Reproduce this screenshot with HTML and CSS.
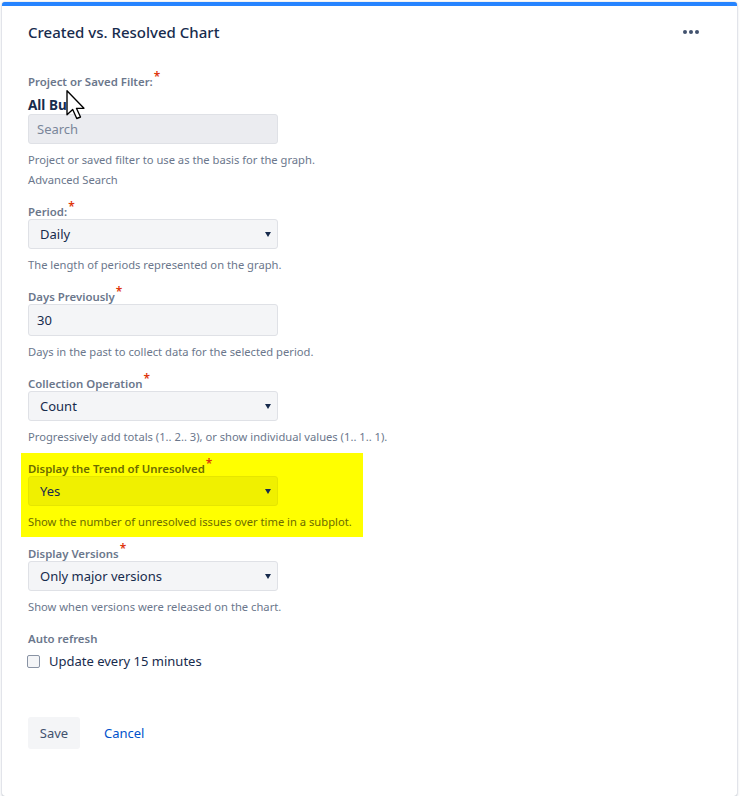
FILE: index.html
```html
<!DOCTYPE html>
<html lang="en">
<head>
    <meta charset="UTF-8">
    <title>Created vs. Resolved Chart</title>
    <link rel="stylesheet" href="styles.css">
</head>
<body>
  <div class="card">
    <div class="card-header">
      <h2 class="card-title">Created vs. Resolved Chart</h2>
      <span class="menu-dots"><i></i><i></i><i></i></span>
    </div>

    <form class="gadget-form">
      <div class="field">
        <label class="field-label">Project or Saved Filter:<sup>*</sup></label>
        <div class="filter-name">All Bu</div>
        <input type="text" class="text-input search-input" placeholder="Search">
        <p class="field-desc">Project or saved filter to use as the basis for the graph.</p>
        <p class="field-desc link-ish">Advanced Search</p>
        <svg class="cursor" width="20" height="30" viewBox="0 0 13 20">
          <path d="M0.5 0.5 L0.5 16.5 L4.3 13 L7 19 L9.5 18 L6.8 12.2 L11.8 12.2 Z" fill="#fff" stroke="#000" stroke-width="0.9" stroke-linejoin="round"/>
        </svg>
      </div>

      <div class="field">
        <label class="field-label">Period:<sup>*</sup></label>
        <div class="select-box"><span>Daily</span><b class="caret"></b></div>
        <p class="field-desc">The length of periods represented on the graph.</p>
      </div>

      <div class="field">
        <label class="field-label">Days Previously<sup>*</sup></label>
        <input type="text" class="text-input days-input" value="30">
        <p class="field-desc">Days in the past to collect data for the selected period.</p>
      </div>

      <div class="field">
        <label class="field-label">Collection Operation<sup>*</sup></label>
        <div class="select-box"><span>Count</span><b class="caret"></b></div>
        <p class="field-desc">Progressively add totals (1.. 2.. 3), or show individual values (1.. 1.. 1).</p>
      </div>

      <div class="field highlight">
        <label class="field-label">Display the Trend of Unresolved<sup>*</sup></label>
        <div class="select-box"><span>Yes</span><b class="caret"></b></div>
        <p class="field-desc">Show the number of unresolved issues over time in a subplot.</p>
      </div>

      <div class="field">
        <label class="field-label">Display Versions<sup>*</sup></label>
        <div class="select-box"><span>Only major versions</span><b class="caret"></b></div>
        <p class="field-desc">Show when versions were released on the chart.</p>
      </div>

      <div class="field">
        <label class="field-label">Auto refresh</label>
        <label class="check-row"><span class="checkbox"></span>Update every 15 minutes</label>
      </div>

      <div class="buttons">
        <button type="button" class="btn-save">Save</button>
        <a class="btn-cancel">Cancel</a>
      </div>
    </form>
  </div>
</body>
</html>
```

FILE: styles.css
```css
body {
    margin: 0;
    background: #fff;
    font-family: "Noto Sans", "Open Sans", sans-serif;
    color: #172b4d;
}
.card {
    margin: 2px 5px 0 2px;
    height: 794px;
    border-top: 4px solid #2684ff;
    border-radius: 3px;
    background: #fff;
    box-shadow: 0 1px 3px rgba(9, 30, 66, 0.25), 0 0 1px rgba(9, 30, 66, 0.3);
    padding: 0 26px;
    box-sizing: border-box;
}
.card-header {
    display: flex;
    align-items: center;
    justify-content: space-between;
    padding-top: 16px;
    height: 20px;
    box-sizing: content-box;
}
.card-title {
    margin: 0;
    font-size: 15px;
    font-weight: 500;
    line-height: 20px;
    color: #172b4d;
}
.menu-dots {
    display: flex;
    gap: 2px;
    margin-right: 12px;
}
.menu-dots i {
    width: 4px;
    height: 4px;
    border-radius: 50%;
    background: #42526e;
}
.gadget-form {
    margin-top: 33px;
}
.field {
    position: relative;
    margin-bottom: 17px;
}
.field-label {
    display: block;
    font-size: 11.4px;
    font-weight: 600;
    line-height: 14px;
    color: #6b778c;
}
.field-label sup {
    color: #de350b;
    font-size: 12px;
    line-height: 0;
    margin-left: 1px;
}
.filter-name {
    font-size: 13.5px;
    font-weight: 700;
    line-height: 16px;
    margin-top: 8px;
    margin-bottom: 1px;
}
.text-input {
    display: block;
    width: 250px;
    height: 30px;
    box-sizing: border-box;
    margin: 0;
    padding: 0 8px;
    border: 1px solid #dfe1e6;
    border-radius: 3px;
    background: #f4f5f7;
    font-family: inherit;
    font-size: 13px;
    color: #172b4d;
    outline: none;
}
.days-input {
    height: 32px;
}
.search-input {
    background: #ebecf0;
}
.search-input::placeholder {
    color: #7a869a;
}
.select-box {
    display: flex;
    align-items: center;
    justify-content: space-between;
    width: 250px;
    height: 30px;
    box-sizing: border-box;
    padding: 0 6px 0 11px;
    border: 1px solid #dfe1e6;
    border-radius: 3px;
    background: #f4f5f7;
    font-size: 13px;
}
.caret {
    width: 0;
    height: 0;
    border-left: 3px solid transparent;
    border-right: 3px solid transparent;
    border-top: 5px solid #172b4d;
}
.field-desc {
    margin: 8px 0 0;
    font-size: 11.2px;
    line-height: 16px;
    color: #6b778c;
}
.field-desc.link-ish {
    margin-top: 4px;
}
.highlight {
    width: 342px;
    box-sizing: border-box;
    margin-left: -7px;
    margin-top: -9px;
    margin-bottom: 10px;
    padding: 9px 7px 7px 7px;
    background: #ffff00;
}
.highlight .select-box {
    background: #f0f000;
    border-color: #e6e600;
}
.highlight .field-label,
.highlight .field-desc {
    color: #6b6b00;
}
.check-row {
    display: flex;
    align-items: center;
    gap: 9px;
    margin-top: 7px;
    font-size: 13px;
    line-height: 16px;
    color: #172b4d;
}
.checkbox {
    width: 11px;
    height: 11px;
    margin-left: -1px;
    border: 1px solid #8993a4;
    border-radius: 2px;
    background: #f4f5f7;
}
.buttons {
    display: flex;
    align-items: center;
    gap: 24px;
    margin-top: 48px;
}
.btn-save {
    width: 52px;
    height: 32px;
    padding: 0;
    border: none;
    border-radius: 3px;
    background: #f4f5f7;
    font-family: inherit;
    font-size: 13px;
    color: #42526e;
}
.btn-cancel {
    font-size: 13px;
    color: #0052cc;
}
.cursor {
    position: absolute;
    left: 38px;
    top: 15px;
}
```
